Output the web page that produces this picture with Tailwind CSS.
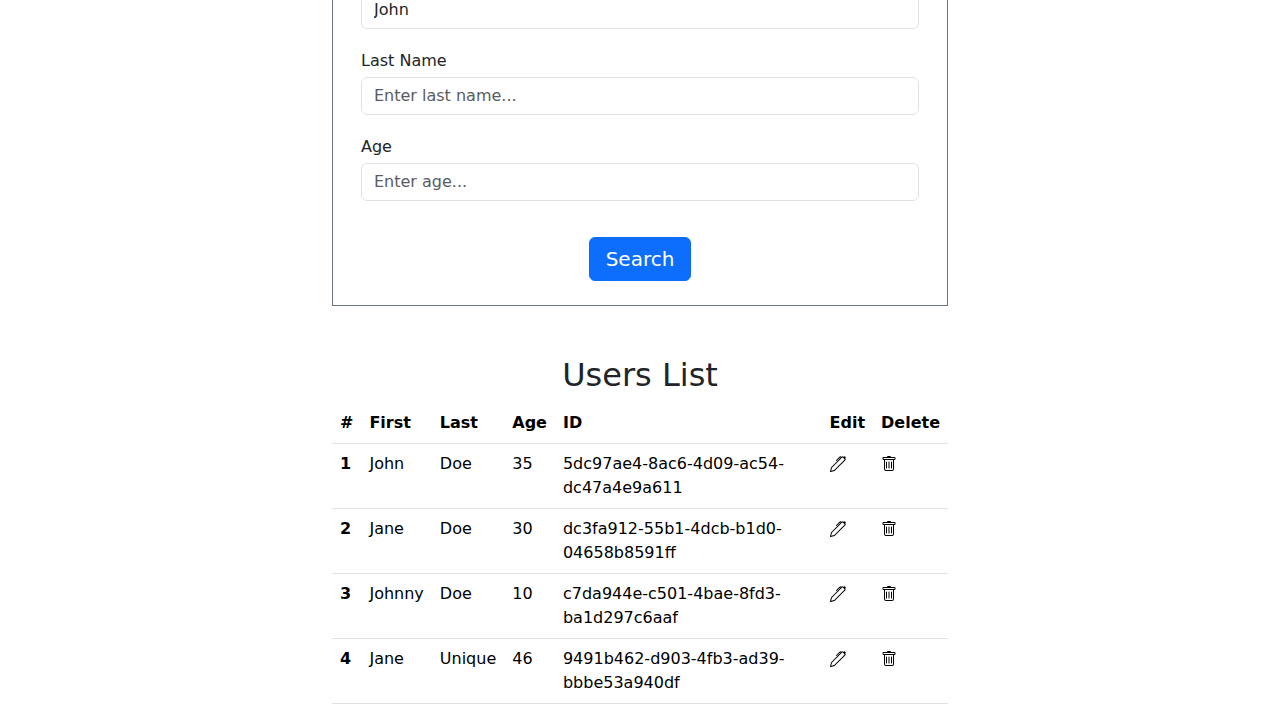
<!DOCTYPE html>
<html lang="en">
<head>
<meta charset="utf-8">
<meta name="viewport" content="width=device-width, initial-scale=1">
<title>Users List</title>
<script src="https://cdn.jsdelivr.net/npm/@tailwindcss/browser@4"></script>
</head>
<body class="overflow-x-hidden bg-white font-['DejaVu_Sans',sans-serif] text-base text-[#212529]">
<svg class="hidden" aria-hidden="true">
  <symbol id="pen" viewBox="0 0 16 16"><path d="m13.498.795.149-.149a1.207 1.207 0 1 1 1.707 1.708l-.149.148a1.5 1.5 0 0 1-.059 2.059L4.854 14.854a.5.5 0 0 1-.233.131l-4 1a.5.5 0 0 1-.606-.606l1-4a.5.5 0 0 1 .131-.232l9.642-9.642a.5.5 0 0 0-.642.056L6.854 4.854a.5.5 0 1 1-.708-.708L9.44.854A1.5 1.5 0 0 1 11.5.796a1.5 1.5 0 0 1 1.998-.001m-.644.766a.5.5 0 0 0-.707 0L1.95 11.756l-.764 3.057 3.057-.764L14.44 3.854a.5.5 0 0 0 0-.708z"/></symbol>
  <symbol id="trash" viewBox="0 0 16 16"><path d="M5.5 5.5A.5.5 0 0 1 6 6v6a.5.5 0 0 1-1 0V6a.5.5 0 0 1 .5-.5m2.5 0a.5.5 0 0 1 .5.5v6a.5.5 0 0 1-1 0V6a.5.5 0 0 1 .5-.5m3 .5a.5.5 0 0 0-1 0v6a.5.5 0 0 0 1 0z"/><path d="M14.5 3a1 1 0 0 1-1 1H13v9a2 2 0 0 1-2 2H5a2 2 0 0 1-2-2V4h-.5a1 1 0 0 1-1-1V2a1 1 0 0 1 1-1H6a1 1 0 0 1 1-1h2a1 1 0 0 1 1 1h3.5a1 1 0 0 1 1 1zM4.118 4 4 4.059V13a1 1 0 0 0 1 1h6a1 1 0 0 0 1-1V4.059L11.882 4zM2.5 3h11V2h-11z"/></symbol>
</svg>
<main class="mx-auto -mt-3 w-full max-w-[640px] px-3">
  <form class="flex flex-col gap-5 border border-t-0 border-[#6c757d] px-7 pt-[3px] pb-6">
    <input type="text" value="John" aria-label="First Name" class="h-[38px] w-full rounded-md border border-[#dee2e6] bg-white px-3 pb-0.5">
    <div class="flex flex-col gap-1">
      <label for="last">Last Name</label>
      <input id="last" type="text" placeholder="Enter last name..." class="h-[38px] w-full rounded-md border border-[#dee2e6] bg-white px-3 pb-0.5 placeholder:text-[#595c5f]">
    </div>
    <div class="flex flex-col gap-1">
      <label for="age">Age</label>
      <input id="age" type="text" placeholder="Enter age..." class="h-[38px] w-full rounded-md border border-[#dee2e6] bg-white px-3 pb-0.5 placeholder:text-[#595c5f]">
    </div>
    <button type="button" class="mt-4 h-11 self-center rounded-md border border-[#0d6efd] bg-[#0d6efd] px-4 text-xl text-white">Search</button>
  </form>
  <h2 class="mt-[49px] mb-2 text-center text-[32px] leading-10">Users List</h2>
  <table class="w-full text-left align-top text-black">
    <thead>
      <tr class="border-b border-[#dee2e6]"><th class="p-2">#</th><th class="p-2">First</th><th class="p-2">Last</th><th class="p-2">Age</th><th class="p-2">ID</th><th class="p-2">Edit</th><th class="p-2">Delete</th></tr>
    </thead>
    <tbody class="align-top">
      <tr class="border-b border-[#dee2e6]"><th class="p-2">1</th><td class="p-2">John</td><td class="p-2">Doe</td><td class="p-2">35</td><td class="p-2">5dc97ae4-8ac6-4d09-ac54-dc47a4e9a611</td>
        <td class="p-2"><button type="button" aria-label="Edit" class="flex h-6 items-center"><svg class="size-4 fill-current"><use href="#pen"/></svg></button></td>
        <td class="p-2"><button type="button" aria-label="Delete" class="flex h-6 items-center"><svg class="size-4 fill-current"><use href="#trash"/></svg></button></td></tr>
      <tr class="border-b border-[#dee2e6]"><th class="p-2">2</th><td class="p-2">Jane</td><td class="p-2">Doe</td><td class="p-2">30</td><td class="p-2">dc3fa912-55b1-4dcb-b1d0-04658b8591ff</td>
        <td class="p-2"><button type="button" aria-label="Edit" class="flex h-6 items-center"><svg class="size-4 fill-current"><use href="#pen"/></svg></button></td>
        <td class="p-2"><button type="button" aria-label="Delete" class="flex h-6 items-center"><svg class="size-4 fill-current"><use href="#trash"/></svg></button></td></tr>
      <tr class="border-b border-[#dee2e6]"><th class="p-2">3</th><td class="p-2">Johnny</td><td class="p-2">Doe</td><td class="p-2">10</td><td class="p-2">c7da944e-c501-4bae-8fd3-ba1d297c6aaf</td>
        <td class="p-2"><button type="button" aria-label="Edit" class="flex h-6 items-center"><svg class="size-4 fill-current"><use href="#pen"/></svg></button></td>
        <td class="p-2"><button type="button" aria-label="Delete" class="flex h-6 items-center"><svg class="size-4 fill-current"><use href="#trash"/></svg></button></td></tr>
      <tr class="border-b border-[#dee2e6]"><th class="p-2">4</th><td class="p-2">Jane</td><td class="p-2">Unique</td><td class="p-2">46</td><td class="p-2">9491b462-d903-4fb3-ad39-bbbe53a940df</td>
        <td class="p-2"><button type="button" aria-label="Edit" class="flex h-6 items-center"><svg class="size-4 fill-current"><use href="#pen"/></svg></button></td>
        <td class="p-2"><button type="button" aria-label="Delete" class="flex h-6 items-center"><svg class="size-4 fill-current"><use href="#trash"/></svg></button></td></tr>
    </tbody>
  </table>
</main>
</body>
</html>
